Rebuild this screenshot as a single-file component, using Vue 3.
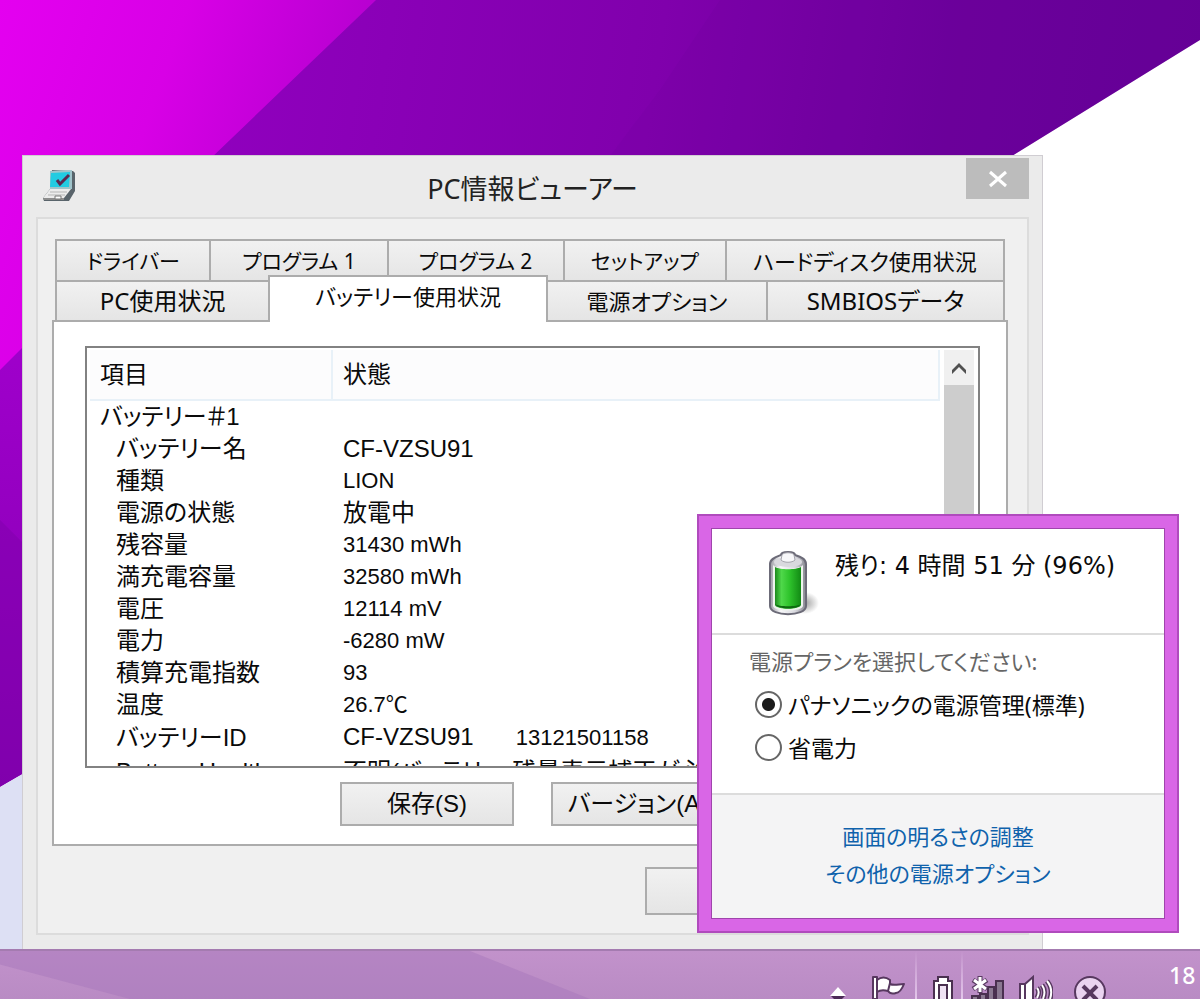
<script setup>
import { ref } from 'vue'

const backTabs = [
  { label: 'ドライバー', grow: 154, size: 'small' },
  { label: 'プログラム 1', grow: 177, size: 'small' },
  { label: 'プログラム 2', grow: 176, size: 'small' },
  { label: 'セットアップ', grow: 162, size: 'small' },
  { label: 'ハードディスク使用状況', grow: 279, size: 'medium' }
]
const frontTabs = [
  { label: 'PC使用状況', grow: 213, size: 'large' },
  { label: 'バッテリー使用状況', grow: 278, size: 'medium' },
  { label: '電源オプション', grow: 220, size: 'medium' },
  { label: 'SMBIOSデータ', grow: 237, size: 'large' }
]
const current = ref('バッテリー使用状況')

const rows = [
  { name: 'バッテリー＃1', value: '', group: true },
  { name: 'バッテリー名', value: 'CF-VZSU91' },
  { name: '種類', value: 'LION', numeric: true },
  { name: '電源の状態', value: '放電中' },
  { name: '残容量', value: '31430 mWh', numeric: true },
  { name: '満充電容量', value: '32580 mWh', numeric: true },
  { name: '電圧', value: '12114 mV', numeric: true },
  { name: '電力', value: '-6280 mW', numeric: true },
  { name: '積算充電指数', value: '93', numeric: true },
  { name: '温度', value: '26.7℃', numeric: true },
  { name: 'バッテリーID', value: 'CF-VZSU91', extra: '13121501158' },
  { name: 'Battery Health', value: '不明(バッテリー 残量表示補正が必要)' }
]

const plan = ref('standard')
const plans = [
  { id: 'standard', label: 'パナソニックの電源管理(標準)' },
  { id: 'saver', label: '省電力' }
]
</script>

<template>
  <div class="desktop">
    <svg class="wallpaper" viewBox="0 0 1200 999" preserveAspectRatio="none" aria-hidden="true">
      <defs>
        <linearGradient id="magenta" x1="0" y1="0" x2="1" y2="0.35">
          <stop offset="0" stop-color="#e400f0" />
          <stop offset="0.45" stop-color="#d800e6" />
          <stop offset="1" stop-color="#b000cc" />
        </linearGradient>
        <linearGradient id="purple" x1="0" y1="0" x2="1" y2="0.1">
          <stop offset="0.1" stop-color="#9400c2" />
          <stop offset="0.55" stop-color="#8000ac" />
          <stop offset="0.8" stop-color="#6b009b" />
          <stop offset="1" stop-color="#640096" />
        </linearGradient>
        <linearGradient id="strip" x1="0" y1="0" x2="0" y2="1">
          <stop offset="0" stop-color="#a000cc" />
          <stop offset="1" stop-color="#8400b0" />
        </linearGradient>
      </defs>
      <rect width="1200" height="999" fill="#ffffff" />
      <path d="M0 0H1200V40L1012 156L0 787Z" fill="url(#purple)" />
      <path d="M660 90L720 0H1200V40L1012 156H610Z" fill="#6a0098" opacity="0.15" />
      <path d="M0 0H376L186 182L0 372Z" fill="url(#magenta)" />
      <path d="M0 370L40 330V764L0 787Z" fill="url(#strip)" />
      <path d="M0 520L40 560V764L0 787Z" fill="#7a00a8" opacity="0.4" />
      <path d="M0 787L40 764V960H0Z" fill="#dde0f4" />
    </svg>

    <main class="window">
      <header class="titlebar">
        <svg class="app-icon" viewBox="0 0 34 34" aria-hidden="true">
          <path d="M10 1L31 2L33 4V22L27 32L2 32L1 29L8 20Z" fill="#59646b" />
          <path d="M8 2L30 1L30 20L8 20Z" fill="#9fc4cb" />
          <path d="M9 4L28 3L27 18L8 18Z" fill="#22cbe2" />
          <path d="M8 20H29L22 29H1Z" fill="#ececec" />
          <path d="M1 29H22V31H2Z" fill="#8d8d8d" />
          <path d="M8 23H25M6 26H23" stroke="#b5b5b5" />
          <path d="M13 27H19V30H13Z" fill="#fff" stroke="#777" />
          <path d="M15 11L18 15L27 6" fill="none" stroke="#5b2850" stroke-width="3" />
        </svg>
        <h1>PC情報ビューアー</h1>
        <button class="close" type="button" aria-label="閉じる">
          <svg viewBox="0 0 18 18" aria-hidden="true"><path d="M1 2L17 16M17 2L1 16" stroke="#fff" stroke-width="3" /></svg>
        </button>
      </header>

      <section class="client">
        <nav class="tabs" aria-label="情報の種類">
          <div class="tab-row">
            <button
              v-for="t in backTabs"
              :key="t.label"
              type="button"
              class="tab"
              :class="t.size"
              :style="{ flexGrow: t.grow }"
            >{{ t.label }}</button>
          </div>
          <div class="tab-row front">
            <button
              v-for="t in frontTabs"
              :key="t.label"
              type="button"
              class="tab"
              :class="[t.size, { active: current === t.label }]"
              :style="{ flexGrow: t.grow }"
              @click="current = t.label"
            >{{ t.label }}</button>
          </div>
        </nav>

        <div class="panel">
          <div class="list">
            <div class="list-view">
              <table>
                <thead>
                  <tr><th>項目</th><th>状態</th></tr>
                </thead>
                <tbody>
                  <tr v-for="r in rows" :key="r.name">
                    <td :class="{ group: r.group }">{{ r.name }}</td>
                    <td :class="{ numeric: r.numeric }">{{ r.value }}<span v-if="r.extra" class="extra">{{ r.extra }}</span></td>
                  </tr>
                </tbody>
              </table>
            </div>
            <div class="scrollbar">
              <button type="button" aria-label="上へスクロール">
                <svg viewBox="0 0 16 14" aria-hidden="true"><path d="M1 12V8L8 1L15 8V12L8 5Z" fill="#505050" /></svg>
              </button>
              <div class="thumb"></div>
            </div>
          </div>
          <div class="actions">
            <button type="button" class="push">保存(S)</button>
            <button type="button" class="push">バージョン(A)</button>
          </div>
        </div>

        <footer class="dialog-actions">
          <button type="button" class="push">OK</button>
          <button type="button" class="push">キャンセル</button>
        </footer>
      </section>
    </main>

    <aside class="flyout">
      <div class="flyout-body">
        <div class="status">
          <svg class="battery" viewBox="0 0 52 66" aria-hidden="true">
            <defs>
              <linearGradient id="cell" x1="0" y1="0" x2="1" y2="0">
                <stop offset="0" stop-color="#1c8a1c" />
                <stop offset="0.25" stop-color="#4fd84a" />
                <stop offset="0.55" stop-color="#2fc42c" />
                <stop offset="1" stop-color="#128a14" />
              </linearGradient>
              <linearGradient id="shell" x1="0" y1="0" x2="1" y2="0">
                <stop offset="0" stop-color="#9a9aa2" />
                <stop offset="0.3" stop-color="#f8f8fa" />
                <stop offset="0.7" stop-color="#d8d8de" />
                <stop offset="1" stop-color="#85858e" />
              </linearGradient>
              <radialGradient id="shade">
                <stop offset="0" stop-color="#777" stop-opacity="0.7" />
                <stop offset="1" stop-color="#777" stop-opacity="0" />
              </radialGradient>
            </defs>
            <ellipse cx="37" cy="53" rx="14" ry="11" fill="url(#shade)" />
            <path d="M2 14C2 9 8 7 13 5C13 1 27 1 27 5C33 7 38 9 38 14V56C38 67 2 67 2 56Z" fill="url(#shell)" stroke="#6c6b78" stroke-width="2" />
            <path d="M5 15C10 20 30 20 35 15V56C34 62 6 62 5 56Z" fill="#eef4ee" />
            <path d="M7 17C12 20 28 20 33 17V55C31 60 9 60 7 55Z" fill="url(#cell)" />
            <ellipse cx="20" cy="12" rx="14" ry="5" fill="#d9d9de" />
            <path d="M14 5C15 2 25 2 26 5L27 10C24 13 16 13 13 10Z" fill="#f7f7f9" stroke="#a5a5ad" />
            <path d="M7 54C10 60 30 60 33 54C30 57 10 57 7 54Z" fill="#0d6a10" />
          </svg>
          <p>残り: 4 時間 51 分 (96%)</p>
        </div>
        <fieldset class="plans">
          <legend>電源プランを選択してください:</legend>
          <label v-for="p in plans" :key="p.id">
            <input v-model="plan" type="radio" name="plan" :value="p.id" />
            <span>{{ p.label }}</span>
          </label>
        </fieldset>
        <div class="links">
          <a href="#brightness">画面の明るさの調整</a>
          <a href="#power">その他の電源オプション</a>
        </div>
      </div>
    </aside>

    <div class="taskbar">
      <svg class="glass" viewBox="0 0 1200 50" preserveAspectRatio="none" aria-hidden="true">
        <path d="M0 0H470L590 50H130L0 14Z" fill="#a878bc" opacity="0.5" />
      </svg>
      <div class="tray">
        <button type="button" class="up" aria-label="隠れているインジケーター">
          <svg width="20" height="24" viewBox="0 0 20 24"><path d="M10 12L18 21H2Z" fill="#fff" /><path d="M3 21H17L14 24H6Z" fill="#4c2a57" /></svg>
        </button>
        <button type="button" class="flag" aria-label="アクション センター">
          <svg width="36" height="24" viewBox="0 0 36 24"><path d="M2 2H6V5C10 2 15 2 19 5V9C23 11 28 9 33 9C31 14 29 18 25 18C22 19 19 19 17 16C13 15 9 15 6 17V24H2Z" fill="#fff" stroke="#57385f" stroke-width="2" stroke-linejoin="round" /><path d="M6 5V17M19 8L17 16" stroke="#57385f" stroke-width="2" /></svg>
        </button>
        <i class="divider"></i>
        <button type="button" class="power" aria-label="電源">
          <svg width="20" height="24" viewBox="0 0 20 24"><path d="M1 24V6H5V2H15V6H19V24" fill="#fff" stroke="#4a3050" stroke-width="2" /><path d="M6 24V10H14V24" fill="#efe2f3" stroke="#4a3050" stroke-width="2" /></svg>
        </button>
        <i class="divider"></i>
        <button type="button" class="network" aria-label="ネットワーク">
          <svg width="34" height="24" viewBox="0 0 34 24"><path d="M1 21H7V25H1ZM9 19H15V25H9ZM17 12H23V25H17ZM25 6H32V25H25Z" fill="#8a7891" stroke="#4a3050" stroke-width="2" /><path d="M9 1V18M2 5L16 14M16 5L2 14" stroke="#5a3c63" stroke-width="5" /><path d="M9 2V17M3 5L15 14M15 5L3 14" stroke="#fff" stroke-width="3" /></svg>
        </button>
        <button type="button" class="sound" aria-label="音量">
          <svg width="34" height="24" viewBox="0 0 34 24"><path d="M1 9H6L14 2V25H1Z" fill="#fff" stroke="#57385f" stroke-width="2" /><path d="M6 9V25" stroke="#57385f" stroke-width="2" /><path d="M18 13C20 15 20 19 18 23M23 10C26 14 26 19 24 24M28 6C33 12 33 18 31 24" fill="none" stroke="#57385f" stroke-width="5" /><path d="M18 13C20 15 20 19 18 23M23 10C26 14 26 19 24 24M28 6C33 12 33 18 31 24" fill="none" stroke="#fff" stroke-width="2" /></svg>
        </button>
        <button type="button" class="ime" aria-label="入力">
          <svg width="34" height="24" viewBox="0 0 34 24"><circle cx="17" cy="17" r="15" fill="#ead3f0" stroke="#57385f" stroke-width="2" /><path d="M10 11L24 25M24 11L10 25" stroke="#57385f" stroke-width="4" /></svg>
        </button>
        <time>18</time>
      </div>
    </div>
  </div>
</template>

<style>
html,
body {
  margin: 0;
}
</style>

<style scoped>
* {
  box-sizing: border-box;
}
.desktop {
  position: relative;
  height: 100vh;
  overflow: hidden;
  color: #0a0a0a;
  font-family: "Noto Sans", "Noto Sans CJK JP", sans-serif;
  font-size: 24px;
  line-height: 32px;
  font-feature-settings: "palt";
}
button {
  margin: 0;
  padding: 0;
  border: 0;
  background: none;
  color: inherit;
  font: inherit;
  font-feature-settings: inherit;
}
.wallpaper {
  position: absolute;
  inset: 0;
  width: 100%;
  height: 100%;
}

/* Viewer window */
.window {
  position: absolute;
  top: 155px;
  right: 157px;
  left: 22px;
  padding: 0 13px 14px;
  background: #ebebeb;
  border: 1px solid #d0cdd2;
}
.titlebar {
  display: grid;
  grid-template-columns: 63px 1fr 63px;
  height: 61px;
  align-items: start;
}
.app-icon {
  width: 34px;
  height: 34px;
  margin: 13px 0 0 6px;
}
h1 {
  margin: 13px 0 0;
  text-align: center;
  font-size: 27px;
  font-weight: 400;
  line-height: 40px;
  color: #222;
}
.close {
  display: flex;
  align-items: center;
  justify-content: center;
  height: 41px;
  margin-top: 2px;
  background: #bcbcbc;
}
.close svg {
  width: 18px;
  height: 18px;
}
.client {
  padding: 20px 19px 18px 14px;
  background: #f0f0f0;
  border: 2px solid #dcdcdc;
}
.tabs {
  margin: 0 3px;
}
.tab-row {
  display: flex;
  height: 41px;
  border-left: 2px solid #acacac;
}
.tab-row.front {
  height: 40px;
}
.tab {
  flex: 1 1 0;
  min-width: 0;
  white-space: nowrap;
  line-height: 28px;
  border: 2px solid #acacac;
  border-left-width: 0;
  border-bottom-width: 0;
  background: linear-gradient(#f1f1f1, #e5e5e5);
}
.tab.small {
  font-size: 21px;
}
.tab.medium {
  font-size: 22px;
}
.tab.active {
  position: relative;
  height: 47px;
  margin-top: -5px;
  margin-left: -2px;
  padding-bottom: 8px;
  border-left-width: 2px;
  background: #fff;
}
.panel {
  padding: 24px 26px 18px 31px;
  background: #fff;
  border: 2px solid #acacac;
}
.list {
  display: flex;
  height: 422px;
  border: 2px solid #828282;
  background: #fff;
  font-family: "Liberation Sans", "Noto Sans CJK JP", sans-serif;
  padding: 2px 4px 0 3px;
}
.list-view {
  flex: 1;
  overflow: hidden;
}
table {
  width: 100%;
  border-collapse: collapse;
  table-layout: fixed;
}
th {
  height: 50px;
  padding: 0 0 0 10px;
  text-align: left;
  font-weight: 400;
  background: #fcfcfd;
  border-right: 2px solid #e8f1f8;
  border-bottom: 2px solid #e8f1f8;
}
th:first-child {
  width: 242px;
}
td {
  height: 32px;
  padding: 0 0 0 11px;
  white-space: nowrap;
  line-height: 32px;
}
td:first-child {
  padding-left: 26px;
}
td.group:first-child {
  padding-left: 10px;
}
td.numeric,
.extra {
  font-size: 22px;
}
tbody tr:last-child td {
  padding-top: 2px;
}
.extra {
  margin-left: 42px;
}
.scrollbar {
  display: flex;
  flex-direction: column;
  width: 30px;
  margin-left: 4px;
  background: #f0f0f0;
}
.scrollbar button {
  height: 35px;
}
.scrollbar svg {
  width: 16px;
  height: 14px;
}
.thumb {
  height: 240px;
  background: #cdcdcd;
}
.actions {
  display: flex;
  justify-content: center;
  gap: 37px;
  margin-top: 14px;
  font-family: "Liberation Sans", "Noto Sans CJK JP", sans-serif;
}
.push {
  width: 174px;
  height: 44px;
  border: 2px solid #acacac;
  background: linear-gradient(#f1f1f1, #e5e5e5);
}
.dialog-actions {
  display: flex;
  justify-content: flex-end;
  gap: 11px;
  padding: 21px 4px 0 0;
}
.dialog-actions .push {
  height: 48px;
}

/* Battery flyout */
.flyout {
  position: absolute;
  right: 21px;
  bottom: 66px;
  width: 482px;
  padding: 13px;
  background: #d966e6;
  border: 2px solid #b04bbd;
}
.flyout-body {
  background: #fff;
  outline: 1px solid #9f45ac;
}
.status {
  display: flex;
  gap: 15px;
  height: 106px;
  padding: 21px 0 0 56px;
  border-bottom: 2px solid #dcdcdc;
  font-family: "DejaVu Sans", "Noto Sans CJK JP", sans-serif;
}
.battery {
  width: 52px;
  height: 66px;
}
.status p {
  margin: 0;
  white-space: nowrap;
}
.plans {
  margin: 0;
  padding: 10px 0 24px 43px;
  border: 0;
  border-bottom: 2px solid #dcdcdc;
  font-size: 23px;
}
.plans legend {
  float: left;
  width: 100%;
  padding: 0;
  margin-left: -6px;
  margin-bottom: 6px;
  color: #666;
  font-size: 22px;
}
.plans label {
  display: flex;
  clear: both;
  align-items: center;
  gap: 6px;
  height: 43px;
  white-space: nowrap;
}
.plans input {
  appearance: none;
  width: 27px;
  height: 27px;
  margin: 0;
  border: 2px solid #666;
  border-radius: 50%;
  background: #fff;
}
.plans input:checked {
  background: radial-gradient(circle, #1b1b1b 6px, #fff 7px);
}
.links {
  display: flex;
  flex-direction: column;
  align-items: center;
  gap: 5px;
  padding: 25px 0 29px;
  background: #f4f4f5;
  font-size: 22px;
}
.links a {
  color: #0f62ac;
  text-decoration: none;
}

/* Taskbar */
.taskbar {
  position: absolute;
  right: 0;
  bottom: 0;
  left: 0;
  height: 50px;
  overflow: hidden;
  background: linear-gradient(#c292cb, #b98bc4);
  border-top: 2px solid #a47bb0;
}
.glass {
  position: absolute;
  inset: 0;
  width: 100%;
  height: 100%;
}
.tray {
  position: relative;
  display: flex;
  justify-content: flex-end;
  align-items: flex-start;
  height: 48px;
  padding-right: 3px;
}
.tray button {
  margin-top: 24px;
  line-height: 0;
}
.tray .up {
  margin-right: 23px;
}
.divider {
  width: 2px;
  height: 48px;
  margin: 0 0 0 8px;
  background: linear-gradient(#c292cb, #e3c6ea);
}
.tray .power {
  margin-left: 16px;
}
.tray .network {
  margin-left: 8px;
}
.tray .sound {
  margin-left: 14px;
}
.tray .ime {
  margin-left: 20px;
}
time {
  width: 28px;
  margin: 8px 0 0 62px;
  color: #fff;
  font-size: 23px;
  font-weight: 500;
}
</style>
